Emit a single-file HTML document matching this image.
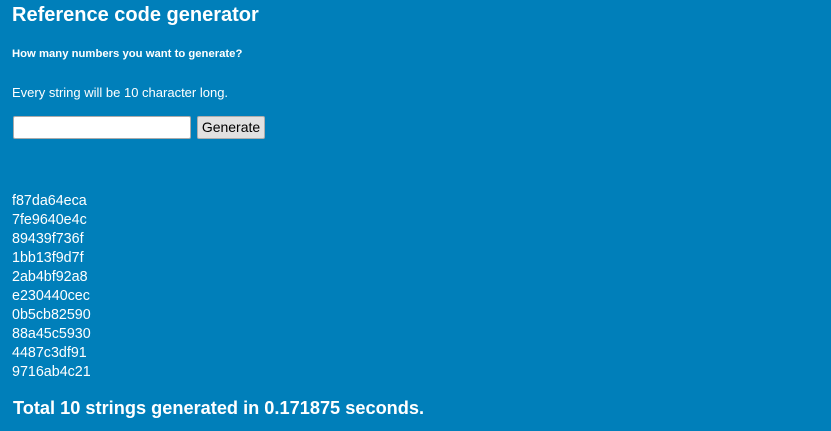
<!DOCTYPE html>
<html><head><meta charset="utf-8"><style>
body{margin:0;width:831px;height:431px;background:#007fba;color:#fff;font-family:"Liberation Sans",Arial,sans-serif;position:relative;overflow:hidden}
div{position:absolute;white-space:nowrap}
.t{left:12px;top:4px;font-size:20px;font-weight:bold}
.q{left:12px;top:48px;font-size:11.3px;font-weight:bold}
.e{left:12px;top:85px;font-size:13px}
.in{left:13px;top:116px;width:178px;height:23px;background:#fff;border:1px solid #aaa;border-radius:2px;box-sizing:border-box}
.b{left:197px;top:116px;width:68px;height:23px;background:#e1e1e1;border:1px solid #adadad;border-radius:2px;box-sizing:border-box;color:#000;font-size:14px;text-align:center;line-height:21px}
.l{left:12px;top:192px;font-size:14.3px;line-height:19px}
.tot{left:13px;top:398px;font-size:18.2px;font-weight:bold}
</style></head><body>
<div class="t">Reference code generator</div>
<div class="q">How many numbers you want to generate?</div>
<div class="e">Every string will be 10 character long.</div>
<div class="in"></div>
<div class="b">Generate</div>
<div class="l">f87da64eca<br>7fe9640e4c<br>89439f736f<br>1bb13f9d7f<br>2ab4bf92a8<br>e230440cec<br>0b5cb82590<br>88a45c5930<br>4487c3df91<br>9716ab4c21</div>
<div class="tot">Total 10 strings generated in 0.171875 seconds.</div>
</body></html>
